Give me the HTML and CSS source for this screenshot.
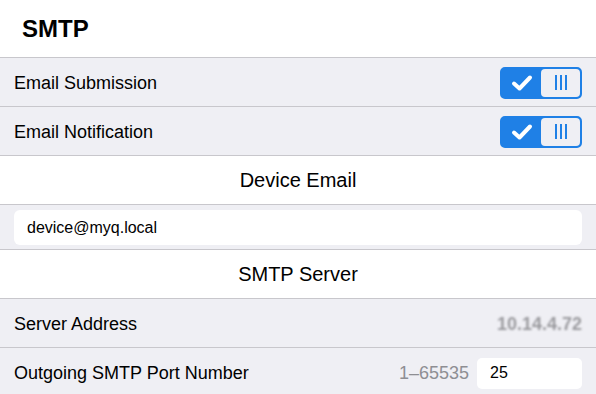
FILE: index.html
```html
<!DOCTYPE html>
<html lang="en">
<head>
    <meta charset="UTF-8">
    <meta name="viewport" content="width=device-width, initial-scale=1.0">
    <title>SMTP</title>
    <link rel="stylesheet" href="styles.css">
</head>
<body>
    <div class="page">
        <div class="title">SMTP</div>

        <!-- switches -->
        <div class="row">
            <span class="label">Email Submission</span>
            <div class="toggle">
                <div class="toggle-on">
                    <svg width="22" height="18" viewBox="0 0 22 18"><path d="M3 9.5 L8.5 14.5 L19 3.5" fill="none" stroke="#fff" stroke-width="4" stroke-linecap="round" stroke-linejoin="round"/></svg>
                </div>
                <div class="toggle-off"><span></span><span></span><span></span></div>
            </div>
        </div>
        <div class="row">
            <span class="label">Email Notification</span>
            <div class="toggle">
                <div class="toggle-on">
                    <svg width="22" height="18" viewBox="0 0 22 18"><path d="M3 9.5 L8.5 14.5 L19 3.5" fill="none" stroke="#fff" stroke-width="4" stroke-linecap="round" stroke-linejoin="round"/></svg>
                </div>
                <div class="toggle-off"><span></span><span></span><span></span></div>
            </div>
        </div>

        <div class="section">Device Email</div>
        <div class="input-row">
            <input class="text-input" type="text" value="device@myq.local">
        </div>

        <div class="section">SMTP Server</div>
        <div class="row">
            <span class="label">Server Address</span>
            <span class="blurred">10.14.4.72</span>
        </div>
        <div class="row">
            <span class="label">Outgoing SMTP Port Number</span>
            <div class="port">
                <span class="hint">1–65535</span>
                <input class="port-input" type="text" value="25">
            </div>
        </div>
    </div>
</body>
</html>
```

FILE: styles.css
```css
body {
    margin: 0;
    font-family: "Liberation Sans", Arial, sans-serif;
    color: #000;
    background-color: #efeff4;
}
.page {
    width: 596px;
    height: 394px;
    overflow: hidden;
}
.title {
    height: 57px;
    padding-left: 22px;
    font-size: 24px;
    font-weight: bold;
    line-height: 57px;
    background-color: #fff;
    border-bottom: 1px solid #c8c7cc;
}
.row {
    height: 48px;
    display: flex;
    align-items: center;
    justify-content: space-between;
    padding: 0 14px;
    background-color: #efeff4;
    border-bottom: 1px solid #c8c7cc;
}
.label {
    font-size: 18px;
    margin-top: 2px;
}
.toggle {
    width: 82px;
    height: 32px;
    box-sizing: border-box;
    display: flex;
    border: 2px solid #1f80e6;
    border-radius: 5px;
    background-color: #1f80e6;
    margin-top: 1px;
}
.toggle-on {
    width: 39px;
    display: flex;
    align-items: center;
    justify-content: center;
}
.toggle-off {
    flex: 1;
    display: flex;
    align-items: center;
    justify-content: center;
    gap: 3px;
    background-color: #efeff4;
    border-radius: 4px;
}
.toggle-off span {
    width: 2px;
    height: 15px;
    background-color: #1f80e6;
}
.section {
    height: 48px;
    line-height: 48px;
    text-align: center;
    font-size: 20px;
    background-color: #fff;
    border-bottom: 1px solid #c8c7cc;
}
.input-row {
    height: 45px;
    box-sizing: border-box;
    padding: 5px 14px 4px;
    border-bottom: 1px solid #c8c7cc;
}
.text-input {
    width: 100%;
    height: 35px;
    box-sizing: border-box;
    border: none;
    border-radius: 6px;
    padding: 0 13px;
    font-family: "Liberation Sans", Arial, sans-serif;
    font-size: 16px;
    color: #000;
    background-color: #fff;
    outline: none;
}
.blurred {
    font-size: 18px;
    font-weight: bold;
    color: #9a9a9e;
    filter: blur(1.2px);
    margin-top: 2px;
}
.port {
    display: flex;
    align-items: center;
    gap: 8px;
    margin-top: 2px;
}
.hint {
    font-size: 18px;
    color: #8e8e93;
}
.port-input {
    width: 105px;
    height: 31px;
    box-sizing: border-box;
    border: none;
    border-radius: 5px;
    padding: 0 13px;
    font-family: "Liberation Sans", Arial, sans-serif;
    font-size: 16px;
    color: #000;
    background-color: #fff;
    outline: none;
}
```
